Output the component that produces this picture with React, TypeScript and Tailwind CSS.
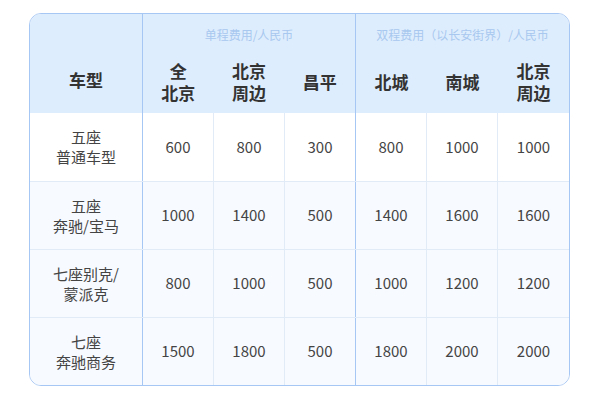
import React from "react";

type Row = { name: string[]; values: string[] };

const rows: Row[] = [
  { name: ["五座", "普通车型"], values: ["600", "800", "300", "800", "1000", "1000"] },
  { name: ["五座", "奔驰/宝马"], values: ["1000", "1400", "500", "1400", "1600", "1600"] },
  { name: ["七座别克/", "蒙派克"], values: ["800", "1000", "500", "1000", "1200", "1200"] },
  { name: ["七座", "奔驰商务"], values: ["1500", "1800", "500", "1800", "2000", "2000"] },
];

const single = [["全", "北京"], ["北京", "周边"], ["昌平"]];
const double = [["北城"], ["南城"], ["北京", "周边"]];

// border style per value column: strong after 3rd, none after last
const cellBorder = (i: number) =>
  i === 2
    ? "border-r border-[#a6c6f3]"
    : i === 5
    ? ""
    : "border-r border-[#e1ebf7]";

const HeadCell: React.FC<{ lines: string[] }> = ({ lines }) => (
  <div className="flex w-[71px] flex-col items-center justify-center text-[17px] font-bold leading-[22px] text-[#333]">
    {lines.map((l) => (
      <span key={l}>{l}</span>
    ))}
  </div>
);

const App: React.FC = () => {
  return (
    <div
      className="h-[400px] w-[600px] bg-white pt-[13px] pl-[29px]"
      style={{ fontFamily: '"Noto Sans CJK SC", "Noto Sans", sans-serif' }}
    >
      <div className="w-[541px] overflow-hidden rounded-[12px] border border-[#a6c6f3]">
        {/* header */}
        <div className="flex h-[99px] bg-[#deedfd]">
          <div className="flex w-[113px] items-center justify-center border-r border-[#a6c6f3] pt-[32px] text-[17px] font-bold text-[#333]">
            车型
          </div>
          <div className="flex w-[213px] flex-col border-r border-[#a6c6f3]">
            <div className="flex h-[39px] items-center justify-center pt-[2px] text-[12px] text-[#a8c8ef]">
              单程费用/人民币
            </div>
            <div className="flex flex-1 pb-[2px]">
              {single.map((h, i) => (
                <HeadCell key={i} lines={h} />
              ))}
            </div>
          </div>
          <div className="flex flex-1 flex-col">
            <div className="flex h-[39px] items-center justify-center pt-[2px] text-[12px] text-[#a8c8ef]">
              双程费用（以长安街界）/人民币
            </div>
            <div className="flex flex-1 pb-[2px]">
              {double.map((h, i) => (
                <HeadCell key={i} lines={h} />
              ))}
            </div>
          </div>
        </div>

        {/* body */}
        {rows.map((r, ri) => (
          <div
            key={ri}
            className={`flex h-[68px] text-[15px] text-[#444] ${
              ri === 0 ? "bg-white" : "border-t border-[#e1ebf7] bg-[#f7faff]"
            }`}
          >
            <div className="flex w-[113px] flex-col items-center justify-center border-r border-[#a6c6f3] leading-[20px]">
              {r.name.map((n) => (
                <span key={n}>{n}</span>
              ))}
            </div>
            {r.values.map((v, i) => (
              <div
                key={i}
                className={`flex w-[71px] items-center justify-center ${cellBorder(i)}`}
              >
                {v}
              </div>
            ))}
          </div>
        ))}
      </div>
    </div>
  );
};

export default App;
